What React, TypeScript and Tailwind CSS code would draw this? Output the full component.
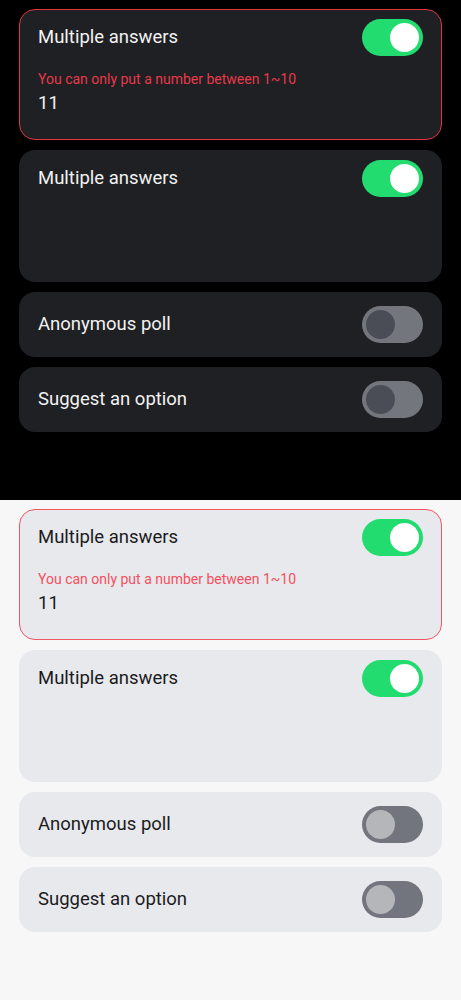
import React from 'react';

type Theme = 'dark' | 'light';

const Toggle = ({ on, theme }: { on: boolean; theme: Theme }) => {
  const track = on ? 'bg-[#22dc70]' : theme === 'dark' ? 'bg-[#74767e]' : 'bg-[#72757d]';
  const knob = on ? 'bg-white' : theme === 'dark' ? 'bg-[#4a4d56]' : 'bg-[#b5b6ba]';
  return (
    <div className={`flex items-center w-[61px] h-[37px] rounded-full px-[4px] shrink-0 ${track} ${on ? 'justify-end' : 'justify-start'}`}>
      <div className={`w-[29px] h-[29px] rounded-full ${knob}`} />
    </div>
  );
};

const Section = ({ theme }: { theme: Theme }) => {
  const dark = theme === 'dark';
  const page = dark ? 'bg-black' : 'bg-[#f7f7f7]';
  const card = dark ? 'bg-[#1f2024]' : 'bg-[#e8e9ed]';
  const text = dark ? 'text-[#f2f2f2]' : 'text-[#1b1b1d]';
  const errBorder = dark ? 'border-[#e3343f]' : 'border-[#f35563]';
  const errText = dark ? 'text-[#e8394a]' : 'text-[#f4505f]';

  return (
    <div className={`h-[500px] px-[19px] pt-[9px] flex flex-col gap-[10px] ${page}`}>
      <div className={`h-[131px] rounded-[16px] border-[1.5px] px-[18px] pt-[9px] ${card} ${errBorder}`}>
        <div className="flex items-center justify-between">
          <span className={`text-[18.5px] ${text}`}>Multiple answers</span>
          <Toggle on theme={theme} />
        </div>
        <div className={`mt-[15px] text-[14px] leading-[16px] ${errText}`}>
          You can only put a number between 1~10
        </div>
        <div className={`mt-[4px] text-[18.5px] leading-[24px] ${text}`}>11</div>
      </div>

      <div className={`h-[132px] rounded-[16px] border border-transparent px-[18px] pt-[9px] ${card}`}>
        <div className="flex items-center justify-between">
          <span className={`text-[18.5px] ${text}`}>Multiple answers</span>
          <Toggle on theme={theme} />
        </div>
      </div>

      {['Anonymous poll', 'Suggest an option'].map((label) => (
        <div key={label} className={`h-[65px] rounded-[16px] px-[19px] flex items-center justify-between ${card}`}>
          <span className={`text-[18.5px] ${text}`}>{label}</span>
          <Toggle on={false} theme={theme} />
        </div>
      ))}
    </div>
  );
};

export default function App() {
  return (
    <div className="w-[461px] font-['Roboto','Liberation_Sans',sans-serif]">
      <Section theme="dark" />
      <Section theme="light" />
    </div>
  );
}
